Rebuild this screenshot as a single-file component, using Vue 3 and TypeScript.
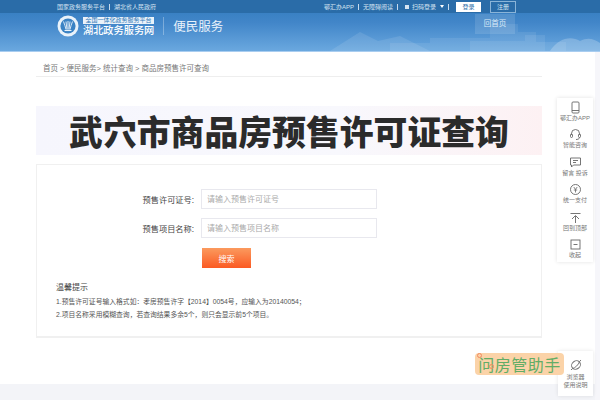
<script setup lang="ts">
const sideItems = [
  { key: 'app', label: '鄂汇办APP' },
  { key: 'chat', label: '智能咨询' },
  { key: 'msg', label: '留言 投诉' },
  { key: 'pay', label: '统一支付' },
  { key: 'top', label: '回到顶部' },
  { key: 'fold', label: '收起' },
]
</script>

<template>
  <div class="page">
    <header class="header">
      <svg class="city" width="300" height="39" viewBox="0 0 300 39" fill="#fff">
        <path d="M30 39 60 20l18 9 22-5 30 15z" opacity=".1" />
        <path d="M90 39v-8h40v-5h60v-14h28v8h18v10h30v9z" opacity=".08" />
        <path d="M170 39v-10h55v-6h20v16z" opacity=".08" />
        <path d="M250 39c8-12 20-16 30-10 8-4 14-2 20 2v8z" opacity=".22" />
      </svg>
      <div class="topbar">
        <div class="top-left">
          <span>国家政务服务平台</span><i class="sep"></i><span>湖北省人民政府</span>
        </div>
        <div class="top-right">
          <span>鄂汇办APP</span><i class="sep"></i>
          <span>无障碍阅读</span><i class="sep"></i>
          <span class="scan"><b class="qr"></b>扫码登录<b class="caret"></b></span><i class="sep"></i>
          <span class="login">登录</span>
          <span class="register">注册</span>
        </div>
      </div>
      <div class="brand-row">
        <div class="brand">
          <svg class="logo" width="22" height="22" viewBox="0 0 22 22">
            <circle cx="11" cy="11" r="10.5" fill="#e9f2fa" />
            <circle cx="11" cy="11" r="7.6" fill="#3a82c4" />
            <path d="M6.5 6.5c1 3 2 5 2.5 8M15.5 6.5c-1 3-2 5-2.5 8M9 6.5l1 8M13 6.5l-1 8M11 6v8.500" fill="none" stroke="#e9f2fa" stroke-width=".9" />
            <path d="M7.500 15.500h7" stroke="#e9f2fa" stroke-width="1.100" />
          </svg>
          <div class="brand-text">
            <span class="brand-tag">全国一体化政务服务平台</span>
            <span class="brand-name">湖北政务服务网</span>
          </div>
          <i class="brand-line"></i>
          <span class="brand-sub">便民服务</span>
        </div>
        <span class="home-btn">回首页</span>
      </div>
    </header>

    <nav class="crumb">首页 &gt; 便民服务&gt; 统计查询 &gt; 商品房预售许可查询</nav>

    <div class="banner">
      <h1>武穴市商品房预售许可证查询</h1>
    </div>

    <section class="card">
      <div class="field">
        <label>预售许可证号:</label>
        <input type="text" placeholder="请输入预售许可证号" />
      </div>
      <div class="field">
        <label>预售项目名称:</label>
        <input type="text" placeholder="请输入预售项目名称" />
      </div>
      <button class="search" type="button">搜索</button>
      <div class="tips">
        <h3>温馨提示</h3>
        <p>1.预售许可证号输入格式如：孝房预售许字【2014】0054号，应输入为20140054；</p>
        <p>2.项目名称采用模糊查询，若查询结果多余5个，则只会显示前5个项目。</p>
      </div>
    </section>

    <div class="foot"></div>
    <div class="strip"></div>

    <aside class="side">
      <div v-for="item in sideItems" :key="item.key" class="side-item">
        <svg width="13" height="13" viewBox="0 0 13 13" fill="none" stroke="#666" stroke-width=".9">
          <template v-if="item.key === 'app'">
            <rect x="3" y="1" width="7" height="11" rx="1" />
            <path d="M3 9.500h7" />
          </template>
          <template v-else-if="item.key === 'chat'">
            <path d="M2.500 7V5.500a4 4 0 0 1 8 0V7" />
            <rect x="1.500" y="6" width="2" height="3.500" rx="1" />
            <rect x="9.500" y="6" width="2" height="3.500" rx="1" />
            <path d="M10.500 9.500c0 1.500-2 2-3.500 2" />
          </template>
          <template v-else-if="item.key === 'msg'">
            <path d="M1.500 2h10v7h-7l-2 2V9h-1z" />
            <path d="M4 4.500h5M4 6.500h3" />
          </template>
          <template v-else-if="item.key === 'pay'">
            <circle cx="6.500" cy="6.500" r="5" />
            <path d="M4.800 4l1.700 2.500L8.200 4M4.800 7h3.400M6.500 6.500v3" stroke-width=".8" />
          </template>
          <template v-else-if="item.key === 'top'">
            <path d="M1.500 2.500h10M6.500 12V5M3 8l3.500-3.500L10 8" />
          </template>
          <template v-else>
            <rect x="2" y="2" width="9" height="9" />
            <path d="M4.500 6.500h4" />
          </template>
        </svg>
        <span>{{ item.label }}</span>
      </div>
    </aside>

    <div class="browser">
      <svg width="14" height="14" viewBox="0 0 14 14" fill="none" stroke="#777" stroke-width="1">
        <ellipse cx="7" cy="7" rx="4.600" ry="4" transform="rotate(-35 7 7)" />
        <path d="M3.200 10.800c3-1 6-3.600 7.600-7.600M2 12l1.200-1.200M10.800 3.200 12 2" />
      </svg>
      <span>浏览器<br />使用说明</span>
    </div>

    <div class="mark">
      <span class="mark-q">问<i class="dot d1"></i><i class="dot d2"></i></span>房管助手
    </div>
  </div>
</template>

<style>
html,
body {
  margin: 0;
  background: #fff;
}
</style>

<style scoped>
.page {
  position: relative;
  width: 600px;
  height: 400px;
  overflow: hidden;
  background: #fff;
  color: #333;
  font-family: 'Liberation Sans', 'Noto Sans CJK SC', sans-serif;
}

.header {
  position: relative;
  height: 52px;
  background: linear-gradient(180deg, #2e79bd 0%, #4286c9 45%, #6aa8df 100%);
  border-bottom: 1px solid #a9cdf0;
  box-sizing: border-box;
  color: #fff;
}

.city {
  position: absolute;
  right: 0;
  bottom: 0;
}

.topbar {
  position: relative;
  display: flex;
  justify-content: space-between;
  align-items: center;
  height: 13px;
  padding: 0 84px 0 57px;
  background: #2a6ca8;
  font-size: 6px;
  color: #d5e4f2;
}

.top-left,
.top-right {
  display: flex;
  align-items: center;
}

.sep {
  width: 1px;
  height: 6px;
  margin: 0 4px;
  background: #c7daec;
}

.scan {
  display: inline-flex;
  align-items: center;
  margin-left: 3px;
}

.qr {
  width: 4px;
  height: 4px;
  margin-right: 3px;
  background: #d5e4f2;
}

.caret {
  margin-left: 4px;
  border-left: 2.500px solid transparent;
  border-right: 2.500px solid transparent;
  border-top: 3px solid #fff;
}

.login,
.register {
  height: 10px;
  line-height: 10px;
  text-align: center;
}

.login {
  width: 25px;
  margin-left: 3px;
  background: #fff;
  color: #2a6ca8;
}

.register {
  width: 24px;
  margin-left: 9px;
  border: 1px solid #8ab4d8;
}

.brand-row {
  position: relative;
  display: flex;
  justify-content: space-between;
  padding: 0 85px 0 57px;
}

.brand {
  display: flex;
  align-items: center;
  height: 25px;
}

.brand-text {
  display: flex;
  flex-direction: column;
  margin: 2px 0 0 4px;
}

.brand-tag {
  width: 71px;
  height: 7px;
  background: #eaf2fa;
  color: #2f78b8;
  font-size: 6px;
  line-height: 7px;
  text-align: center;
  white-space: nowrap;
}

.brand-name {
  margin-top: 1px;
  font-size: 10.200px;
  line-height: 12px;
  font-weight: 500;
  white-space: nowrap;
}

.brand-line {
  width: 1px;
  height: 18px;
  margin: 0 9px;
  background: rgba(255, 255, 255, 0.3);
}

.brand-sub {
  font-size: 12.500px;
  color: #e8f1fa;
}

.home-btn {
  width: 40px;
  height: 20px;
  margin-top: 1px;
  line-height: 20px;
  text-align: center;
  font-size: 7.500px;
  background: rgba(255, 255, 255, 0.12);
  color: #dcebf8;
}

.crumb {
  width: 506px;
  height: 25px;
  margin-left: 36px;
  padding-left: 7px;
  box-sizing: border-box;
  border-bottom: 1px solid #eee;
  font-size: 7.500px;
  line-height: 33px;
  color: #777;
  white-space: nowrap;
}

.banner {
  display: flex;
  align-items: center;
  justify-content: center;
  width: 506px;
  height: 49px;
  margin: 29px 0 0 36px;
  background: linear-gradient(90deg, #f6f6fd 0%, #f8f8fd 60%, #fdf1f3 100%);
}

.banner h1 {
  margin: 0;
  font-family: 'Noto Sans CJK SC', sans-serif;
  font-size: 33.850px;
  line-height: 49px;
  font-weight: 900;
  color: #2b2b2b;
  white-space: nowrap;
}

.card {
  display: flex;
  flex-direction: column;
  width: 506px;
  height: 174px;
  margin: 9px 0 0 36px;
  padding-top: 24px;
  box-sizing: border-box;
  border: 1px solid #f0f0f0;
  border-bottom-width: 2px;
}

.field {
  display: flex;
  align-items: center;
  height: 20px;
  margin-bottom: 9px;
}

.field label {
  width: 164px;
  padding-right: 7px;
  box-sizing: border-box;
  font-size: 8.200px;
  color: #444;
  text-align: right;
}

.field input {
  width: 176px;
  height: 20px;
  padding: 0 5px;
  box-sizing: border-box;
  border: 1px solid #e8e8ee;
  outline: none;
  font: 8px 'Liberation Sans', 'Noto Sans CJK SC', sans-serif;
}

.field input::placeholder {
  color: #aaa;
}

.search {
  width: 49px;
  height: 20px;
  margin: 1px 0 0 165px;
  padding: 0;
  border: 0;
  background: linear-gradient(180deg, #fb9a5e, #fb5a23);
  color: #fff;
  font: 8px 'Liberation Sans', 'Noto Sans CJK SC', sans-serif;
}

.tips {
  margin: 14px 0 0 19px;
  color: #555;
}

.tips h3 {
  margin: 0 0 2px;
  font-size: 8px;
  line-height: 12px;
  font-weight: 400;
  color: #444;
}

.tips p {
  margin: 0 0 2px;
  font-size: 6.800px;
  line-height: 11px;
  white-space: nowrap;
}

.foot {
  position: absolute;
  left: 0;
  right: 0;
  bottom: 0;
  height: 16px;
  background: #f3f4f8;
}

.strip {
  position: absolute;
  top: 52px;
  right: 0;
  bottom: 0;
  width: 5px;
  background: #f6f6fa;
}

.side {
  position: absolute;
  top: 98px;
  right: 7px;
  display: flex;
  flex-direction: column;
  width: 36px;
  height: 164px;
  padding-top: 3px;
  box-sizing: border-box;
  background: #fff;
  box-shadow: 0 0 4px rgba(0, 0, 0, 0.12);
}

.side-item {
  display: flex;
  flex-direction: column;
  flex-shrink: 0;
  align-items: center;
  height: 27.400px;
  font-size: 6px;
  line-height: 8px;
  color: #777;
  white-space: nowrap;
}

.browser {
  position: absolute;
  top: 351px;
  right: 7px;
  display: flex;
  flex-direction: column;
  align-items: center;
  width: 35px;
  height: 45px;
  padding-top: 7px;
  box-sizing: border-box;
  background: #fff;
  box-shadow: 0 0 4px rgba(0, 0, 0, 0.1);
  font-size: 6px;
  line-height: 8px;
  color: #777;
  text-align: center;
}

.browser svg {
  margin-bottom: 1px;
}

.mark {
  position: absolute;
  top: 353px;
  left: 475px;
  width: 89px;
  height: 22px;
  border-radius: 4px;
  background: #fbd3a8;
  color: #62ad66;
  font-family: 'Noto Sans CJK SC', sans-serif;
  font-size: 16px;
  line-height: 22px;
  letter-spacing: 0.500px;
  text-align: center;
  white-space: nowrap;
}

.mark-q {
  position: relative;
}

.dot {
  position: absolute;
  width: 3px;
  height: 3px;
  border: 1px solid #f28a60;
  border-radius: 50%;
  box-sizing: content-box;
}

.d1 {
  top: 1px;
  left: -1px;
}

.d2 {
  top: 12px;
  left: 11px;
}
</style>
